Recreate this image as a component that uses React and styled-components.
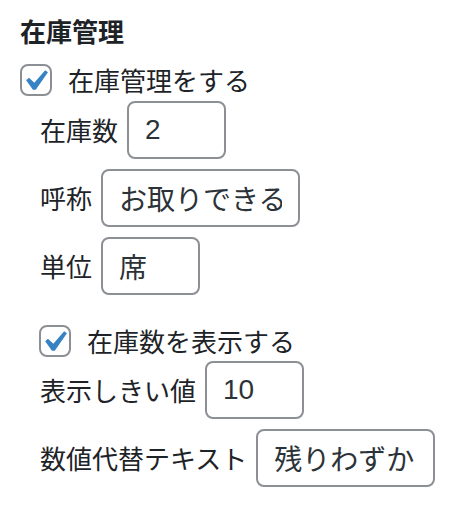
import styled, { createGlobalStyle } from "styled-components";

const GlobalStyle = createGlobalStyle`
    body {
        margin: 0;
        background: #ffffff;
        font-family: "Noto Sans CJK JP", "Noto Sans", sans-serif;
        color: #1d2327;
    }
`;

// チェックマーク (WP の checkbox と同じ形)
const CheckIcon = () => (
    <CheckSvg viewBox="0 0 20 20">
        <path d="M14.83 4.89l1.34.94-5.81 8.38H9.02L5.78 9.67l1.34-1.25 2.57 2.4z" />
    </CheckSvg>
);

function Checkbox({ label }) {
    return (
        <CheckRow>
            <CheckBox>
                <CheckIcon />
            </CheckBox>
            <CheckLabel>{label}</CheckLabel>
        </CheckRow>
    );
}

function Field({ label, value, width }) {
    return (
        <FieldRow>
            <FieldLabel>{label}</FieldLabel>
            <TextInput $width={width} defaultValue={value} />
        </FieldRow>
    );
}

export default function App() {
    return (
        <>
            <GlobalStyle />
            <Panel>
                <Title>在庫管理</Title>
                <Checkbox label="在庫管理をする" />
                <Indent>
                    <FieldList>
                        <Field label="在庫数" value="2" width={99} />
                        <Field label="呼称" value="お取りできる" width={199} />
                        <Field label="単位" value="席" width={99} />
                    </FieldList>
                    <SubSection>
                        <Checkbox label="在庫数を表示する" />
                        <FieldList>
                            <Field label="表示しきい値" value="10" width={99} />
                            <Field label="数値代替テキスト" value="残りわずか" width={179} />
                        </FieldList>
                    </SubSection>
                </Indent>
            </Panel>
        </>
    );
}

const Panel = styled.div`
    padding: 13px 20px 20px 20px;
`;

const Title = styled.h3`
    margin: 0;
    font-size: 26px;
    line-height: 36px;
    font-weight: 700;
    color: #1d2327;
`;

const CheckRow = styled.div`
    display: flex;
    align-items: center;
    gap: 16px;
    margin-top: 13px;
`;

const CheckBox = styled.span`
    position: relative;
    box-sizing: border-box;
    width: 32px;
    height: 32px;
    flex-shrink: 0;
    border: 2px solid #8c8f94;
    border-radius: 8px;
    background: #ffffff;
`;

const CheckSvg = styled.svg`
    position: absolute;
    left: -8px;
    top: -6px;
    width: 42px;
    height: 42px;
    fill: #3582c4;
`;

const CheckLabel = styled.span`
    font-size: 26px;
    line-height: 36px;
    color: #1d2327;
`;

const Indent = styled.div`
    padding-left: 20px;
`;

const FieldList = styled.div`
    display: flex;
    flex-direction: column;
    gap: 10px;
    margin-top: 3px;
`;

const SubSection = styled.div`
    margin-top: 28px;

    ${CheckRow} {
        margin-top: 0;
        margin-left: -1px;
    }

    ${FieldList} {
        margin-top: 2px;
    }
`;

const FieldRow = styled.div`
    display: flex;
    align-items: center;
    gap: 9px;
`;

const FieldLabel = styled.span`
    font-size: 26px;
    line-height: 36px;
    color: #1d2327;
    white-space: nowrap;
`;

const TextInput = styled.input`
    box-sizing: border-box;
    width: ${({ $width }) => $width}px;
    height: 58px;
    margin: 0;
    padding: 0 16px;
    border: 2px solid #8c8f94;
    border-radius: 8px;
    background: #ffffff;
    font-family: "Liberation Sans", "Noto Sans CJK JP", sans-serif;
    font-size: 28px;
    color: #2c3338;
    outline: none;
`;
